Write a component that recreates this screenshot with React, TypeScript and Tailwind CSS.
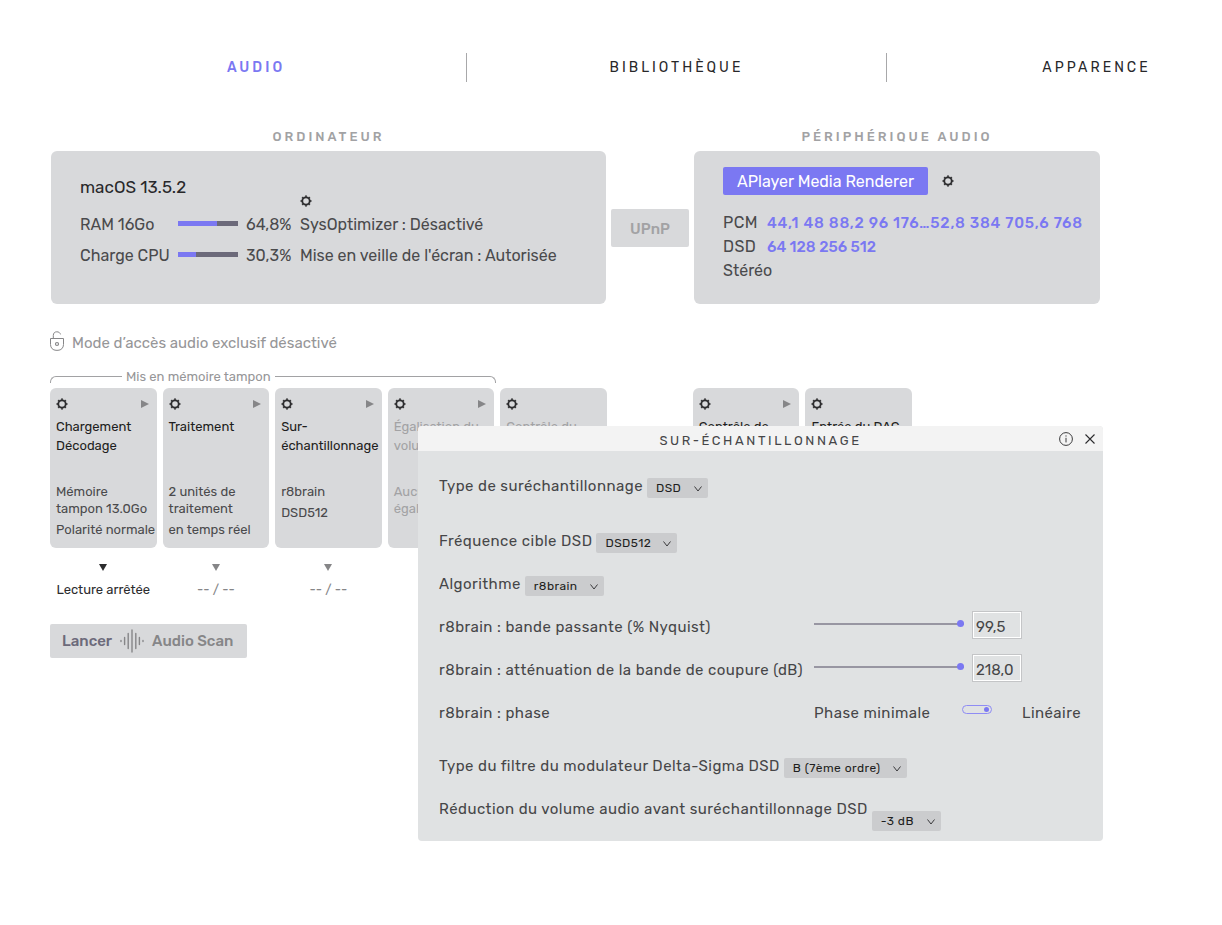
import { useState } from 'react';
import type { ReactNode } from 'react';

const TABS = [
  { label: 'AUDIO', className: 'font-medium text-[#7b78f2]' },
  { label: 'BIBLIOTHÈQUE', className: 'border-l border-[#a8a8aa] text-[#28282a]' },
  { label: 'APPARENCE', className: 'border-l border-[#a8a8aa] pl-[84px] text-[#28282a]' },
];

const STAGES = [
  { title: ['Chargement', 'Décodage'], body: ['Mémoire\ntampon 13.0Go', 'Polarité normale'], play: true },
  { title: ['Traitement'], body: ['2 unités de\ntraitement', 'en temps réel'], play: true },
  { title: ['Sur-', 'échantillonnage'], body: ['r8brain', 'DSD512'], play: true },
  { title: ['Égalisation du', 'volume'], body: ['Aucune\négalisation'], play: true, muted: true },
  { title: ['Contrôle du', 'volume'], body: [], play: false, muted: true },
];

const OUTPUT_STAGES = [
  { title: ['Contrôle de'], body: [], play: true },
  { title: ['Entrée du DAC'], body: [], play: false },
];

const STAGE_GRID = 'grid grid-cols-[repeat(5,minmax(0,1fr))_74px_repeat(2,minmax(0,1fr))] gap-x-1.5';

type Stage = { title: string[]; body: string[]; play: boolean; muted?: boolean };

function Gear() {
  return (
    <svg viewBox="0 0 12 12" className="size-3 text-[#2c2c2e]" fill="none" stroke="currentColor" aria-hidden="true">
      <circle cx="6" cy="6" r="3.7" strokeWidth="1.8" />
      {[0, 45, 90, 135, 180, 225, 270, 315].map((angle) => (
        <path key={angle} d="M6 0.6V1.8" strokeWidth="2" transform={`rotate(${angle} 6 6)`} />
      ))}
    </svg>
  );
}

function GearButton({ label }: { label: string }) {
  return (
    <button type="button" aria-label={label} className="block size-3">
      <Gear />
    </button>
  );
}

function Meter({ label, value }: { label: string; value: number }) {
  return (
    <div role="meter" aria-label={label} aria-valuenow={value} className="mb-0.5 h-[5px] w-[60px] bg-[#6c6a7a]">
      <div className="h-full bg-[#7b78f2]" style={{ width: `${value}%` }} />
    </div>
  );
}

function StageCard({ stage }: { stage: Stage }) {
  return (
    <article className="min-h-[160px] whitespace-nowrap rounded-md bg-[#d8d9db] px-1.5 pt-2.5 text-[13px]">
      <div className="flex h-3 items-center justify-between pr-0.5">
        <GearButton label={`Réglages ${stage.title.join(' ')}`} />
        {stage.play && (
          <svg viewBox="0 0 8 8" className="size-2" fill="#868688" aria-hidden="true">
            <path d="M0 0L8 4L0 8Z" />
          </svg>
        )}
      </div>
      <h3 className={`mt-[7px] min-h-[38px] leading-[19px] ${stage.muted ? 'text-[#a2a2a4]' : 'text-[#1e1e20]'}`}>
        {stage.title.map((line) => (
          <span key={line} className="block">{line}</span>
        ))}
      </h3>
      <div className={`mt-7 space-y-1 whitespace-pre leading-[17px] ${stage.muted ? 'text-[#a2a2a4]' : 'text-[#4a4a4c]'}`}>
        {stage.body.map((line) => (
          <p key={line}>{line}</p>
        ))}
      </div>
    </article>
  );
}

function StageStatus({ children, active }: { children: ReactNode; active?: boolean }) {
  return (
    <div className={`flex flex-col items-center text-[13px] leading-5 ${active ? 'text-[#2c2c2e]' : 'text-[#868688]'}`}>
      <svg viewBox="0 0 8 7" className="h-[7px] w-2" fill="currentColor" aria-hidden="true">
        <path d="M0 0H8L4 7Z" />
      </svg>
      <p className="mt-[9px]">{children}</p>
    </div>
  );
}

function SelectRow({ id, label, value, className = '', low }: { id: string; label: string; value: string; className?: string; low?: boolean }) {
  return (
    <div className={`flex h-[43px] items-center gap-1 ${className}`}>
      <label htmlFor={id}>{label}</label>
      <div className={`relative ${low ? 'mt-6' : 'mt-1'}`}>
        <select id={id} className="block h-5 appearance-none rounded-xs bg-[#cbccce] pl-[9px] pr-[26px] text-xs leading-5 text-[#1e1e20]">
          <option>{value}</option>
        </select>
        <svg viewBox="0 0 8 6" className="pointer-events-none absolute right-1.5 top-2 h-1.5 w-2" fill="none" stroke="#3a3a3c" aria-hidden="true">
          <path d="M0.5 0.5L4 5L7.5 0.5" />
        </svg>
      </div>
    </div>
  );
}

function SliderRow({ id, label, min, max, value }: { id: string; label: string; min: number; max: number; value: number }) {
  const [current, setCurrent] = useState(value);
  return (
    <div className="grid h-[43px] grid-cols-[375px_150px_auto] items-center">
      <label htmlFor={id}>{label}</label>
      <input
        id={id}
        type="range"
        min={min}
        max={max}
        step={0.1}
        value={current}
        onChange={(e) => setCurrent(Number(e.target.value))}
        className="mb-1.5 h-2 w-full appearance-none bg-[linear-gradient(#9896a2,#9896a2)] bg-[length:100%_2px] bg-center bg-no-repeat [&::-webkit-slider-thumb]:size-[7px] [&::-webkit-slider-thumb]:appearance-none [&::-webkit-slider-thumb]:rounded-full [&::-webkit-slider-thumb]:bg-[#7b78f2]"
      />
      <input
        type="text"
        aria-label={`${label}, valeur`}
        value={current.toFixed(1).replace('.', ',')}
        readOnly
        className="mb-1 ml-[9px] h-[26px] w-12 border border-white bg-transparent px-[2px] pt-1 tracking-normal shadow-[0_0_0_1px_#c4c5c7] outline-none"
      />
    </div>
  );
}

function OversamplingDialog() {
  return (
    <section role="dialog" aria-labelledby="dialog-title" className="absolute left-[418px] top-[426px] w-[685px] overflow-hidden rounded bg-[#e0e2e3] text-[#464648]">
      <header className="relative flex h-[25px] items-center justify-center bg-[#f3f3f3]">
        <h2 id="dialog-title" className="pt-1 text-[13px] leading-5 tracking-[0.2em]">SUR-ÉCHANTILLONNAGE</h2>
        <div className="absolute inset-y-0 right-1.5 flex items-center gap-2.5">
          <button type="button" aria-label="Informations">
            <svg viewBox="0 0 14 14" className="size-3.5" fill="none" stroke="#3a3a3c" aria-hidden="true">
              <circle cx="7" cy="7" r="6.4" />
              <path d="M7 5.8V10.4M7 3.4V4.6" />
            </svg>
          </button>
          <button type="button" aria-label="Fermer">
            <svg viewBox="0 0 14 14" className="size-3.5" fill="none" stroke="#2c2c2e" strokeWidth="1.1" aria-hidden="true">
              <path d="M2.5 2.5L11.5 11.5M11.5 2.5L2.5 11.5" />
            </svg>
          </button>
        </div>
      </header>

      <form className="whitespace-nowrap pb-[11px] pl-[21px] pt-[13px] text-[15px] leading-5 tracking-[0.03em]">
        <SelectRow id="type" label="Type de suréchantillonnage" value="DSD" />
        <SelectRow id="frequence" label="Fréquence cible DSD" value="DSD512" className="mt-3" />
        <SelectRow id="algorithme" label="Algorithme" value="r8brain" />
        <SliderRow id="bande" label="r8brain : bande passante (% Nyquist)" min={80} max={99.5} value={99.5} />
        <SliderRow id="attenuation" label="r8brain : atténuation de la bande de coupure (dB)" min={49} max={218} value={218} />
        <div className="grid h-[43px] grid-cols-[375px_148px_60px_auto] items-center">
          <label htmlFor="phase">r8brain : phase</label>
          <span>Phase minimale</span>
          <input
            id="phase"
            type="checkbox"
            role="switch"
            defaultChecked
            className="mb-1.5 flex h-[9px] w-[30px] appearance-none items-center rounded-full border border-[#8f8cf4] px-0.5 before:size-[5px] before:rounded-full before:bg-[#7b78f2] checked:justify-end"
          />
          <span>Linéaire</span>
        </div>
        <SelectRow id="filtre" label="Type du filtre du modulateur Delta-Sigma DSD" value="B (7ème ordre)" className="mt-2.5" />
        <SelectRow id="reduction" label="Réduction du volume audio avant suréchantillonnage DSD" value="-3 dB" low />
      </form>
    </section>
  );
}

export default function App() {
  return (
    <main className="relative min-h-screen overflow-hidden bg-white pb-16 pt-[53px] font-['Rubik','Roboto',sans-serif] text-[#4a4a4c]">
      <nav className="ml-[46px] grid h-[29px] grid-cols-[5fr_5fr_4fr] text-sm tracking-[3px]">
        {TABS.map((tab) => (
          <a key={tab.label} href="#" className={`flex items-center justify-center ${tab.className}`}>
            {tab.label}
          </a>
        ))}
      </nav>

      {/* Computer and output device */}
      <section className="ml-[51px] mr-[122px] mt-[45px] grid grid-cols-[minmax(0,555fr)_78px_minmax(0,406fr)] gap-x-[5px] gap-y-1">
        <h2 className="text-center text-[13px] font-medium leading-5 tracking-[3px] text-[#a2a2a4]">ORDINATEUR</h2>
        <h2 className="col-start-3 text-center text-[13px] font-medium leading-5 tracking-[3px] text-[#a2a2a4]">PÉRIPHÉRIQUE AUDIO</h2>

        <div className="min-h-[153px] rounded-md bg-[#d8d9db] pl-[29px] pt-5">
          <div className="grid grid-cols-[98px_68px_54px_auto] items-center justify-start whitespace-nowrap">
            <h3 className="col-span-3 h-[38px] text-[17px] leading-8 text-[#28282a]">macOS 13.5.2</h3>
            <div className="self-end pb-0.5"><GearButton label="Réglages SysOptimizer" /></div>
            <span className="leading-[31px]">RAM 16Go</span>
            <Meter label="RAM" value={64.8} />
            <span>64,8%</span>
            <span>SysOptimizer : Désactivé</span>
            <span className="leading-[31px]">Charge CPU</span>
            <Meter label="Charge CPU" value={30.3} />
            <span>30,3%</span>
            <span>Mise en veille de l'écran : Autorisée</span>
          </div>
        </div>

        <div className="flex h-[38px] items-center justify-center self-center rounded-xs bg-[#d8d9db] pt-1 text-[15px] font-medium text-[#a2a2a4]">UPnP</div>

        <div className="min-h-[153px] rounded-md bg-[#d8d9db] pl-[29px] pt-4">
          <div className="flex items-center gap-3.5">
            <button type="button" className="h-7 rounded-xs bg-[#7b78f2] px-3.5 pt-px text-white">APlayer Media Renderer</button>
            <GearButton label="Réglages du périphérique" />
          </div>
          <dl className="mt-4 grid grid-cols-[44px_auto] justify-start whitespace-nowrap leading-6">
            <dt className="tracking-wide">PCM</dt>
            <dd className="text-[15px] font-medium tracking-wider text-[#7b78f2]">44,1 48 88,2 96 176…52,8 384 705,6 768</dd>
            <dt className="tracking-wide">DSD</dt>
            <dd className="text-[15px] font-medium text-[#7b78f2]">64 128 256 512</dd>
          </dl>
          <p className="leading-6">Stéréo</p>
        </div>
      </section>

      <section className="ml-[50px] mr-[310px]">
        <div className="mt-[27px] flex items-start gap-2">
          <svg viewBox="0 0 14 20" className="h-5 w-3.5" fill="none" stroke="#868688" aria-hidden="true">
            <path d="M0.5 7.5H13.5V13.5C13.5 17 11 19.3 8 19.3H6C3 19.3 0.5 17 0.5 13.5Z" />
            <path d="M3.3 7.5V4.5C3.3 2 4.8 0.8 6.8 0.8C8.8 0.8 10.1 1.8 10.5 3.4" />
            <circle cx="7" cy="13" r="1.5" strokeWidth="1.2" />
          </svg>
          <p className="pt-0.5 text-[15px] leading-5 text-[#969698]">Mode d’accès audio exclusif désactivé</p>
        </div>

        {/* Processing chain */}
        <div className={`mt-3.5 ${STAGE_GRID}`}>
          <div className="col-span-4 -mr-0.5 flex h-[21px] items-start">
            <span className="mt-[9px] h-[7px] w-[72px] rounded-tl-md border-l border-t border-[#a2a2a4]" />
            <span className="px-1 text-[13px] leading-5 text-[#969698]">Mis en mémoire tampon</span>
            <span className="mt-[9px] h-[7px] flex-1 rounded-tr-md border-r border-t border-[#a2a2a4]" />
          </div>
        </div>
        <div className={STAGE_GRID}>
          {STAGES.map((stage, idx) => (
            <StageCard key={idx} stage={stage} />
          ))}
          <span />
          {OUTPUT_STAGES.map((stage, idx) => (
            <StageCard key={idx} stage={stage} />
          ))}
        </div>
        <div className={`mt-4 ${STAGE_GRID}`}>
          <StageStatus active>Lecture arrêtée</StageStatus>
          <StageStatus>-- / --</StageStatus>
          <StageStatus>-- / --</StageStatus>
        </div>

        <button type="button" className="mt-6 flex h-[34px] items-center gap-2 rounded-xs bg-[#d8d9db] pl-3 pr-3.5 text-[15px] font-medium text-[#868688]">
          <span className="text-[#6c6a7a]">Lancer</span>
          <svg viewBox="0 0 24 24" className="size-6" fill="none" stroke="#868688" strokeWidth="1.4" strokeLinecap="round" aria-hidden="true">
            <path d="M1 11.5V12.5M4.6 8.5V15.5M8.2 4.5V19.5M12 1V23M15.8 4.5V19.5M19.4 8.5V15.5M23 11.5V12.5" />
          </svg>
          <span>Audio Scan</span>
        </button>
      </section>

      <OversamplingDialog />
    </main>
  );
}
